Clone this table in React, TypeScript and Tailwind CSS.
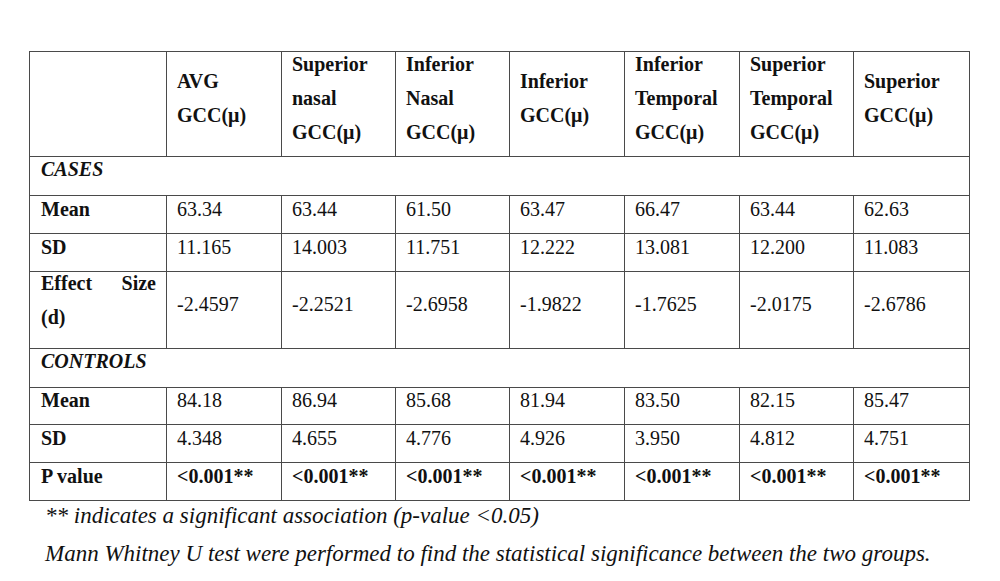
import React from "react";

const headers: string[][] = [
  ["AVG", "GCC(μ)"],
  ["Superior", "nasal", "GCC(μ)"],
  ["Inferior", "Nasal", "GCC(μ)"],
  ["Inferior", "GCC(μ)"],
  ["Inferior", "Temporal", "GCC(μ)"],
  ["Superior", "Temporal", "GCC(μ)"],
  ["Superior", "GCC(μ)"],
];

const casesMean = ["63.34", "63.44", "61.50", "63.47", "66.47", "63.44", "62.63"];
const casesSD = ["11.165", "14.003", "11.751", "12.222", "13.081", "12.200", "11.083"];
const effect = ["-2.4597", "-2.2521", "-2.6958", "-1.9822", "-1.7625", "-2.0175", "-2.6786"];
const ctrlMean = ["84.18", "86.94", "85.68", "81.94", "83.50", "82.15", "85.47"];
const ctrlSD = ["4.348", "4.655", "4.776", "4.926", "3.950", "4.812", "4.751"];
const pval = Array(7).fill("<0.001**");

function Cell({
  children,
  bold = false,
  first = false,
}: {
  children: React.ReactNode;
  bold?: boolean;
  first?: boolean;
}) {
  return (
    <div
      className={`bg-white flex items-center ${first ? "pl-[11px] pr-[10px]" : "pl-[10px] pr-[6px]"} ${
        bold ? "font-bold" : ""
      }`}
    >
      <div className="leading-[34px] pb-[12px] w-full">{children}</div>
    </div>
  );
}

function DataRow({ label, values, boldValues = false }: { label: string; values: string[]; boldValues?: boolean }) {
  return (
    <>
      <Cell bold first>
        {label}
      </Cell>
      {values.map((v, i) => (
        <Cell key={i} bold={boldValues}>
          {v}
        </Cell>
      ))}
    </>
  );
}

function SpanRow({ label }: { label: string }) {
  return (
    <div className="col-span-8 bg-white flex items-center pl-[11px]">
      <div className="leading-[34px] pb-[14px] font-bold italic">{label}</div>
    </div>
  );
}

export default function App() {
  return (
    <div className="w-[1000px] h-[581px] bg-white text-[#111] overflow-hidden font-['Liberation_Serif','Times_New_Roman',serif]">
      <div className="pt-[51px] pl-[29px]">
        <div className="grid w-[941px] grid-cols-[136px_114px_113px_113px_114px_114px_113px_115px] grid-rows-[104px_38px_37px_37px_76px_38px_36px_37px_37px] gap-px p-px bg-[#4a4a4a] text-[20px]">
          <div className="bg-white" />
          {headers.map((h, i) => (
            <Cell key={i} bold>
              {h.map((line, j) => (
                <div key={j}>{line}</div>
              ))}
            </Cell>
          ))}

          <SpanRow label="CASES" />
          <DataRow label="Mean" values={casesMean} />
          <DataRow label="SD" values={casesSD} />

          <div className="bg-white flex items-center pl-[11px] pr-[10px] font-bold">
            <div className="leading-[34px] pb-[20px] w-full text-justify">Effect Size (d)</div>
          </div>
          {effect.map((v, i) => (
            <Cell key={i}>{v}</Cell>
          ))}

          <SpanRow label="CONTROLS" />
          <DataRow label="Mean" values={ctrlMean} />
          <DataRow label="SD" values={ctrlSD} />
          <DataRow label="P value" values={pval} boldValues />
        </div>
        <div className="pl-[16px] italic text-[23px] leading-[38px] -mt-[4px] whitespace-nowrap">
          <p>** indicates a significant association (p-value &lt;0.05)</p>
          <p>Mann Whitney U test were performed to find the statistical significance between the two groups.</p>
        </div>
      </div>
    </div>
  );
}
